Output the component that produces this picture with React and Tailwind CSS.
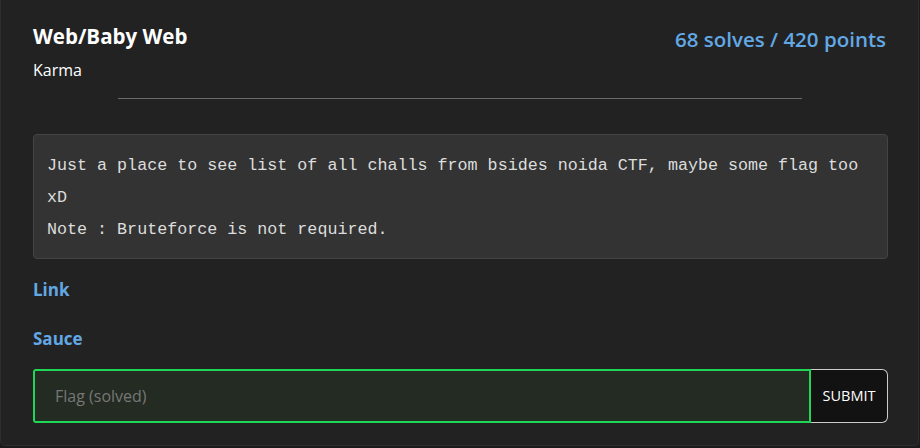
import React from 'react';

const sans = "font-['Open_Sans','Noto_Sans',sans-serif]";

export default function App() {
  return (
    <div className="w-[920px] h-[448px] bg-[#1b1b1b]">
      <div className={`w-[919px] h-[446px] bg-[#222222] border border-[#2e2e2e] border-t-0 rounded-b-[5px] pl-[32px] pr-[30px] pt-[20px] ${sans}`}>
        <div className="flex items-start justify-between">
          <div>
            <h1 className="text-[20.5px] font-bold text-white leading-[32px]">Web/Baby Web</h1>
            <div className="text-[16px] text-white leading-[24px] mt-[6px]">Karma</div>
          </div>
          <div className="text-[20.5px] font-semibold text-[#62a8e5] leading-[32px] mt-[3px] mr-[2px]">
            68 solves / 420 points
          </div>
        </div>

        <hr className="w-[684px] mt-[16px] ml-[85px] border-0 border-t border-[#6a6a6a]" />

        <div className="mt-[35px] bg-[#333333] border border-[#444444] rounded-[4px] px-[13px] pt-[15px] pb-[12px]">
          <p className="font-['Liberation_Mono','DejaVu_Sans_Mono',monospace] text-[16.7px] leading-[32px] text-[#dddddd] whitespace-pre-wrap">
            {"Just a place to see list of all challs from bsides noida CTF, maybe some flag too xD\nNote : Bruteforce is not required."}
          </p>
        </div>

        <div className="mt-[19px] flex flex-col gap-[25px]">
          <a className="text-[17px] font-bold text-[#62a8e5] leading-[24px] w-fit">Link</a>
          <a className="text-[17px] font-bold text-[#62a8e5] leading-[24px] w-fit">Sauce</a>
        </div>

        <div className="mt-[18px] flex h-[54px]">
          <input
            disabled
            placeholder="Flag (solved)"
            className="flex-1 h-full bg-[#232b23] border-2 border-[#1fd655] rounded-l-[3px] px-[20px] text-[16px] text-[#bbbbbb] placeholder:text-[#777777] outline-none"
          />
          <button className="w-[77px] h-full bg-[#121212] border border-[#cccccc] border-l-0 rounded-r-[6px] text-[14.5px] text-white">
            SUBMIT
          </button>
        </div>
      </div>
    </div>
  );
}
